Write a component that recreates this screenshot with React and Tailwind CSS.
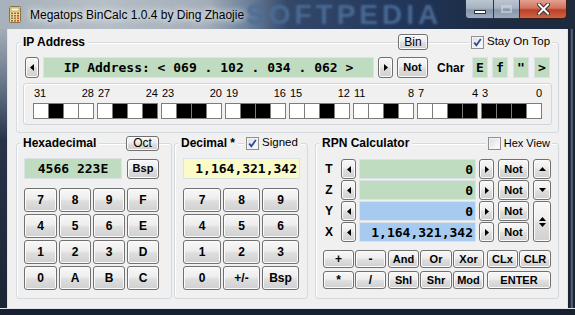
import React from "react";

const F = "font-['Liberation_Sans',Arial,sans-serif]";
const MONO = "font-['DejaVu_Sans_Mono',monospace] font-bold text-[13px] leading-none whitespace-nowrap";

function Btn({ className = "", bold = true, children }) {
  return (
    <div
      className={`flex items-center justify-center box-border border border-[#707070] rounded-[3px] bg-[linear-gradient(#f8f8f8,#ededed_45%,#dedede_55%,#d0d0d0)] shadow-[inset_0_0_0_1px_#fbfbfb] text-black text-[11px] leading-none whitespace-nowrap ${
        bold ? "font-bold" : ""
      } ${className}`}
    >
      {children}
    </div>
  );
}

const TriL = () => (
  <svg width="4" height="7" viewBox="0 0 4 7">
    <path d="M4 0V7L0 3.5Z" fill="#000" />
  </svg>
);
const TriR = () => (
  <svg width="4" height="7" viewBox="0 0 4 7">
    <path d="M0 0V7L4 3.5Z" fill="#000" />
  </svg>
);
const TriU = () => (
  <svg width="7" height="4" viewBox="0 0 7 4">
    <path d="M0 4H7L3.5 0Z" fill="#000" />
  </svg>
);
const TriD = () => (
  <svg width="7" height="4" viewBox="0 0 7 4">
    <path d="M0 0H7L3.5 4Z" fill="#000" />
  </svg>
);

function Field({ className = "", children }) {
  return (
    <div className={`flex items-center box-border border border-[#dde2e6] ${MONO} ${className}`}>
      {children}
    </div>
  );
}

function Check({ checked }) {
  return (
    <span className="w-[13px] h-[13px] box-border border border-[#8f8f8f] bg-[linear-gradient(135deg,#d9dde2,#ffffff)] shadow-[inset_0_0_0_1px_#f4f4f4] flex items-center justify-center shrink-0">
      {checked && (
        <svg width="9" height="9" viewBox="0 0 9 9">
          <path d="M1.2 4.6L3.4 7.2L7.8 1" stroke="#2f4a95" strokeWidth="1.8" fill="none" />
        </svg>
      )}
    </span>
  );
}

const GROUP = "box-border border border-[#d3dae0] rounded-[3px] shadow-[inset_1px_1px_0_#ffffff] flex flex-col";

const BITS = "01000101011001100010001000111110";

function Bits() {
  const groups = [0, 1, 2, 3, 4, 5, 6, 7];
  return (
    <div className="flex gap-[3px]">
      {groups.map((g) => (
        <div key={g} className="flex flex-col w-[61px]">
          <div className="flex justify-between h-[12px] text-[11px] leading-[12px] pl-[1px]">
            <span>{31 - 4 * g}</span>
            <span>{28 - 4 * g}</span>
          </div>
          <div className="flex mt-[4px]">
            {[0, 1, 2, 3].map((i) => (
              <div
                key={i}
                className={`w-[16px] h-[16px] box-border border border-[#7c7c7c] ${i > 0 ? "-ml-[1px]" : ""} ${
                  BITS[g * 4 + i] === "1" ? "bg-black" : "bg-white"
                }`}
              />
            ))}
          </div>
        </div>
      ))}
    </div>
  );
}

function CalcIcon() {
  return (
    <svg width="12" height="17" viewBox="0 0 12 17">
      <rect x="0.5" y="0.5" width="11" height="16" rx="1" fill="#f1d88e" stroke="#8a7440" />
      <rect x="2" y="2" width="8" height="3" fill="#fcf5dc" stroke="#9c8450" strokeWidth="0.6" />
      {[0, 1, 2, 3].map((r) =>
        [0, 1, 2].map((c) => (
          <rect
            key={`${r}-${c}`}
            x={2 + c * 3}
            y={6.5 + r * 2.5}
            width="2"
            height="1.6"
            fill={c === 2 ? "#c8483a" : "#8d7a4c"}
          />
        ))
      )}
    </svg>
  );
}

export default function App() {
  const hexKeys = ["7", "8", "9", "F", "4", "5", "6", "E", "1", "2", "3", "D", "0", "A", "B", "C"];
  const decKeys = ["7", "8", "9", "4", "5", "6", "1", "2", "3", "0", "+/-", "Bsp"];
  const rpnRows = [
    { l: "T", v: "0", c: "bg-[#c0dcc0]" },
    { l: "Z", v: "0", c: "bg-[#c0dcc0]" },
    { l: "Y", v: "0", c: "bg-[#a6caf0]" },
    { l: "X", v: "1,164,321,342", c: "bg-[#a6caf0]" },
  ];

  return (
    <div className={`w-[575px] h-[315px] flex flex-col bg-[#1b2535] overflow-hidden text-black ${F}`}>
      {/* Title bar */}
      <div className="relative h-[29px] shrink-0 flex items-start bg-[linear-gradient(90deg,#a7b1bb_0%,#b6bec6_18%,#a3aeba_36%,#6d819b_43%,#34496a_50%,#22365a_70%,#1d2c44_85%,#1e2b3d_100%)]">
        <div className="absolute left-[246px] top-0 h-[29px] text-[28px] leading-[29px] font-bold text-[#4b6d98] tracking-[4px] blur-[0.8px] opacity-90 select-none whitespace-nowrap">
          SOFTPEDIA
        </div>
        <div className="relative ml-[9px] mt-[6px]">
          <CalcIcon />
        </div>
        <div className="relative ml-[9px] h-[29px] flex items-center text-[12px] text-black whitespace-nowrap [text-shadow:0_0_6px_#ffffff,0_0_10px_#eef2f6]">
          Megatops BinCalc 1.0.4 by Ding Zhaojie
        </div>
        <div className="flex-1" />
        <div className="relative flex mr-[8px] h-[19px]">
          <div className="flex h-[19px] box-border border border-t-0 border-[#27344a] rounded-bl-[4px] overflow-hidden">
            <div className="w-[27px] h-full flex items-end justify-center pb-[4px] bg-[linear-gradient(#bcc6d2,#a6b2c1_45%,#8796ab_55%,#9dabbd)]">
              <div className="w-[12px] h-[4px] bg-white box-border border border-[#2a3140]" />
            </div>
            <div className="w-[26px] h-full border-l border-[#27344a] flex items-center justify-center bg-[linear-gradient(#bcc6d2,#a6b2c1_45%,#8796ab_55%,#9dabbd)]">
              <div className="w-[11px] h-[8px] box-border border-2 border-t-[3px] border-[#c9d1dc] opacity-70" />
            </div>
          </div>
          <div className="w-[47px] h-[19px] box-border border border-t-0 border-l-0 border-[#3b1c18] rounded-br-[4px] flex items-center justify-center bg-[linear-gradient(#e3a090,#d27260_45%,#bd3f27_55%,#cc6445)]">
            <svg width="13" height="12" viewBox="0 0 13 12">
              <path d="M2 1.5L11 10.5M11 1.5L2 10.5" stroke="#3a2a28" strokeWidth="4" strokeLinecap="square" />
              <path d="M2 1.5L11 10.5M11 1.5L2 10.5" stroke="#ffffff" strokeWidth="2" strokeLinecap="square" />
            </svg>
          </div>
        </div>
      </div>

      {/* Middle */}
      <div className="flex h-[279px] shrink-0">
        <div className="w-[8px] box-border border-r border-[#dfe5ea] bg-[linear-gradient(#a3adb7,#6b7a8d_18%,#27334a_40%,#1b2535)]" />
        <div className="w-[559px] h-[279px] box-border bg-[#f0f0f0] px-[8px] pt-[13px] flex flex-col">
          {/* IP group */}
          <div className={`${GROUP} h-[91px]`}>
            <div className="flex items-center h-[16px] -mt-[9px]">
              <span className="ml-[3px] px-[3px] bg-[#f0f0f0] font-bold text-[12px] leading-[16px] whitespace-nowrap">IP Address</span>
              <Btn bold={false} className="ml-auto w-[30px] h-[16px] text-[12px]">
                Bin
              </Btn>
              <div className="ml-[41px] mr-[6px] w-[83px] h-[16px] bg-[#f0f0f0] flex items-center pl-[2px]">
                <Check checked />
                <span className="ml-[3px] text-[11.5px] leading-none whitespace-nowrap">Stay On Top</span>
              </div>
            </div>
            <div className="flex items-center mt-[7px] h-[21px]">
              <Btn className="ml-[8px] w-[14px] h-[21px]">
                <TriL />
              </Btn>
              <Field className="ml-[4px] w-[331px] h-[21px] bg-[#c0dcc0] justify-center">
                IP Address: &lt; 069 . 102 . 034 . 062 &gt;
              </Field>
              <Btn className="ml-[4px] w-[15px] h-[21px]">
                <TriR />
              </Btn>
              <Btn className="ml-[4px] w-[31px] h-[21px] text-[11.5px]">Not</Btn>
              <span className="ml-[9px] w-[27px] font-bold text-[12px]">Char</span>
              <Field className="ml-[8px] w-[16px] h-[21px] bg-[#c0dcc0] justify-center">E</Field>
              <Field className="ml-[4px] w-[16px] h-[21px] bg-[#c0dcc0] justify-center">f</Field>
              <Field className="ml-[5px] w-[16px] h-[21px] bg-[#c0dcc0] justify-center">"</Field>
              <Field className="ml-[5px] w-[16px] h-[21px] bg-[#c0dcc0] justify-center">&gt;</Field>
            </div>
            <div className="mt-[5px] ml-[6px] w-[529px] h-[42px] box-border border border-[#cfd5db] rounded-[3px] shadow-[inset_1px_1px_0_#ffffff] pt-[3px] pl-[9px]">
              <Bits />
            </div>
          </div>

          {/* Bottom groups */}
          <div className="flex mt-[10px]">
            {/* Hexadecimal */}
            <div className={`${GROUP} w-[156px] h-[156px]`}>
              <div className="flex items-center h-[16px] -mt-[9px]">
                <span className="ml-[3px] px-[3px] bg-[#f0f0f0] font-bold text-[12px] leading-[16px] whitespace-nowrap">Hexadecimal</span>
                <Btn bold={false} className="ml-auto mr-[12px] w-[33px] h-[15px] text-[12px]">
                  Oct
                </Btn>
              </div>
              <div className="flex items-center mt-[7px]">
                <Field className="ml-[7px] w-[98px] h-[21px] bg-[#c0dcc0] justify-center">4566 223E</Field>
                <Btn className="ml-[5px] w-[32px] h-[20px] text-[11.5px]">Bsp</Btn>
              </div>
              <div className="mt-[9px] ml-[7px] grid grid-cols-[33px_32px_32px_32px] gap-[2px] auto-rows-[24px]">
                {hexKeys.map((k) => (
                  <Btn key={k} className="text-[12px]">
                    {k}
                  </Btn>
                ))}
              </div>
            </div>

            {/* Decimal */}
            <div className={`${GROUP} ml-[2px] w-[134px] h-[156px]`}>
              <div className="flex items-center h-[16px] -mt-[9px]">
                <span className="ml-[3px] px-[3px] bg-[#f0f0f0] font-bold text-[12px] leading-[16px] whitespace-nowrap">Decimal *</span>
                <div className="ml-[6px] h-[16px] bg-[#f0f0f0] flex items-center pl-[2px] pr-[3px]">
                  <Check checked />
                  <span className="ml-[3px] text-[11.5px] leading-none whitespace-nowrap">Signed</span>
                </div>
              </div>
              <div className="flex items-center mt-[7px]">
                <Field className="ml-[8px] w-[117px] h-[21px] bg-[#fbfbc8] justify-end pr-[2px]">1,164,321,342</Field>
              </div>
              <div className="mt-[9px] ml-[8px] grid grid-cols-[38px_37px_37px] gap-[2px] auto-rows-[24px]">
                {decKeys.map((k) => (
                  <Btn key={k} className="text-[12px]">
                    {k}
                  </Btn>
                ))}
              </div>
            </div>

            {/* RPN */}
            <div className={`${GROUP} ml-[7px] w-[244px] h-[156px]`}>
              <div className="flex items-center h-[16px] -mt-[9px]">
                <span className="ml-[3px] px-[3px] bg-[#f0f0f0] font-bold text-[12px] leading-[16px] whitespace-nowrap">RPN Calculator</span>
                <div className="ml-auto mr-[6px] h-[16px] bg-[#f0f0f0] flex items-center pl-[2px] pr-[2px]">
                  <Check />
                  <span className="ml-[3px] text-[11px] leading-none whitespace-nowrap">Hex View</span>
                </div>
              </div>
              <div className="flex mt-[8px] pl-[4px]">
                <div className="flex flex-col gap-[1px]">
                  {rpnRows.map((r) => (
                    <div key={r.l} className="flex items-center h-[20px]">
                      <span className="w-[18px] text-center font-bold text-[12px]">{r.l}</span>
                      <Btn className="ml-[3px] w-[15px] h-[20px]">
                        <TriL />
                      </Btn>
                      <Field className={`ml-[3px] w-[117px] h-[20px] justify-end pr-[2px] ${r.c}`}>{r.v}</Field>
                      <Btn className="ml-[3px] w-[15px] h-[20px]">
                        <TriR />
                      </Btn>
                      <Btn className="ml-[4px] w-[31px] h-[20px] text-[11.5px]">Not</Btn>
                    </div>
                  ))}
                </div>
                <div className="ml-[4px] w-[18px] flex flex-col gap-[1px]">
                  <Btn className="h-[20px]">
                    <TriU />
                  </Btn>
                  <Btn className="h-[20px]">
                    <TriD />
                  </Btn>
                  <Btn className="h-[41px] flex-col gap-[2px]">
                    <TriU />
                    <TriD />
                  </Btn>
                </div>
              </div>
              <div className="flex mt-[8px] pl-[7px]">
                <div className="grid grid-cols-[31px_31px] gap-x-[1px] gap-y-[3px] auto-rows-[18px]">
                  <Btn className="text-[12px]">+</Btn>
                  <Btn className="text-[12px]">-</Btn>
                  <Btn className="text-[12px]">*</Btn>
                  <Btn className="text-[12px]">/</Btn>
                </div>
                <div className="ml-[2px] grid grid-cols-[31px_32px_31px] gap-x-[1px] gap-y-[3px] auto-rows-[18px]">
                  <Btn>And</Btn>
                  <Btn>Or</Btn>
                  <Btn>Xor</Btn>
                  <Btn>Shl</Btn>
                  <Btn>Shr</Btn>
                  <Btn>Mod</Btn>
                </div>
                <div className="ml-[3px] grid grid-cols-[31px_32px] gap-x-[1px] gap-y-[3px] auto-rows-[18px]">
                  <Btn>CLx</Btn>
                  <Btn>CLR</Btn>
                  <Btn className="col-span-2">ENTER</Btn>
                </div>
              </div>
            </div>
          </div>
        </div>
        <div className="w-[8px] box-border border-l border-[#dfe5ea] bg-[linear-gradient(90deg,#1a2333,#1a2333_30%,#4a5a70_45%,#5d6d82_60%,#1b2535_75%)]" />
      </div>
      <div className="h-[7px] shrink-0 box-border border-t border-[#dfe5ea] bg-[#182131]" />
    </div>
  );
}
